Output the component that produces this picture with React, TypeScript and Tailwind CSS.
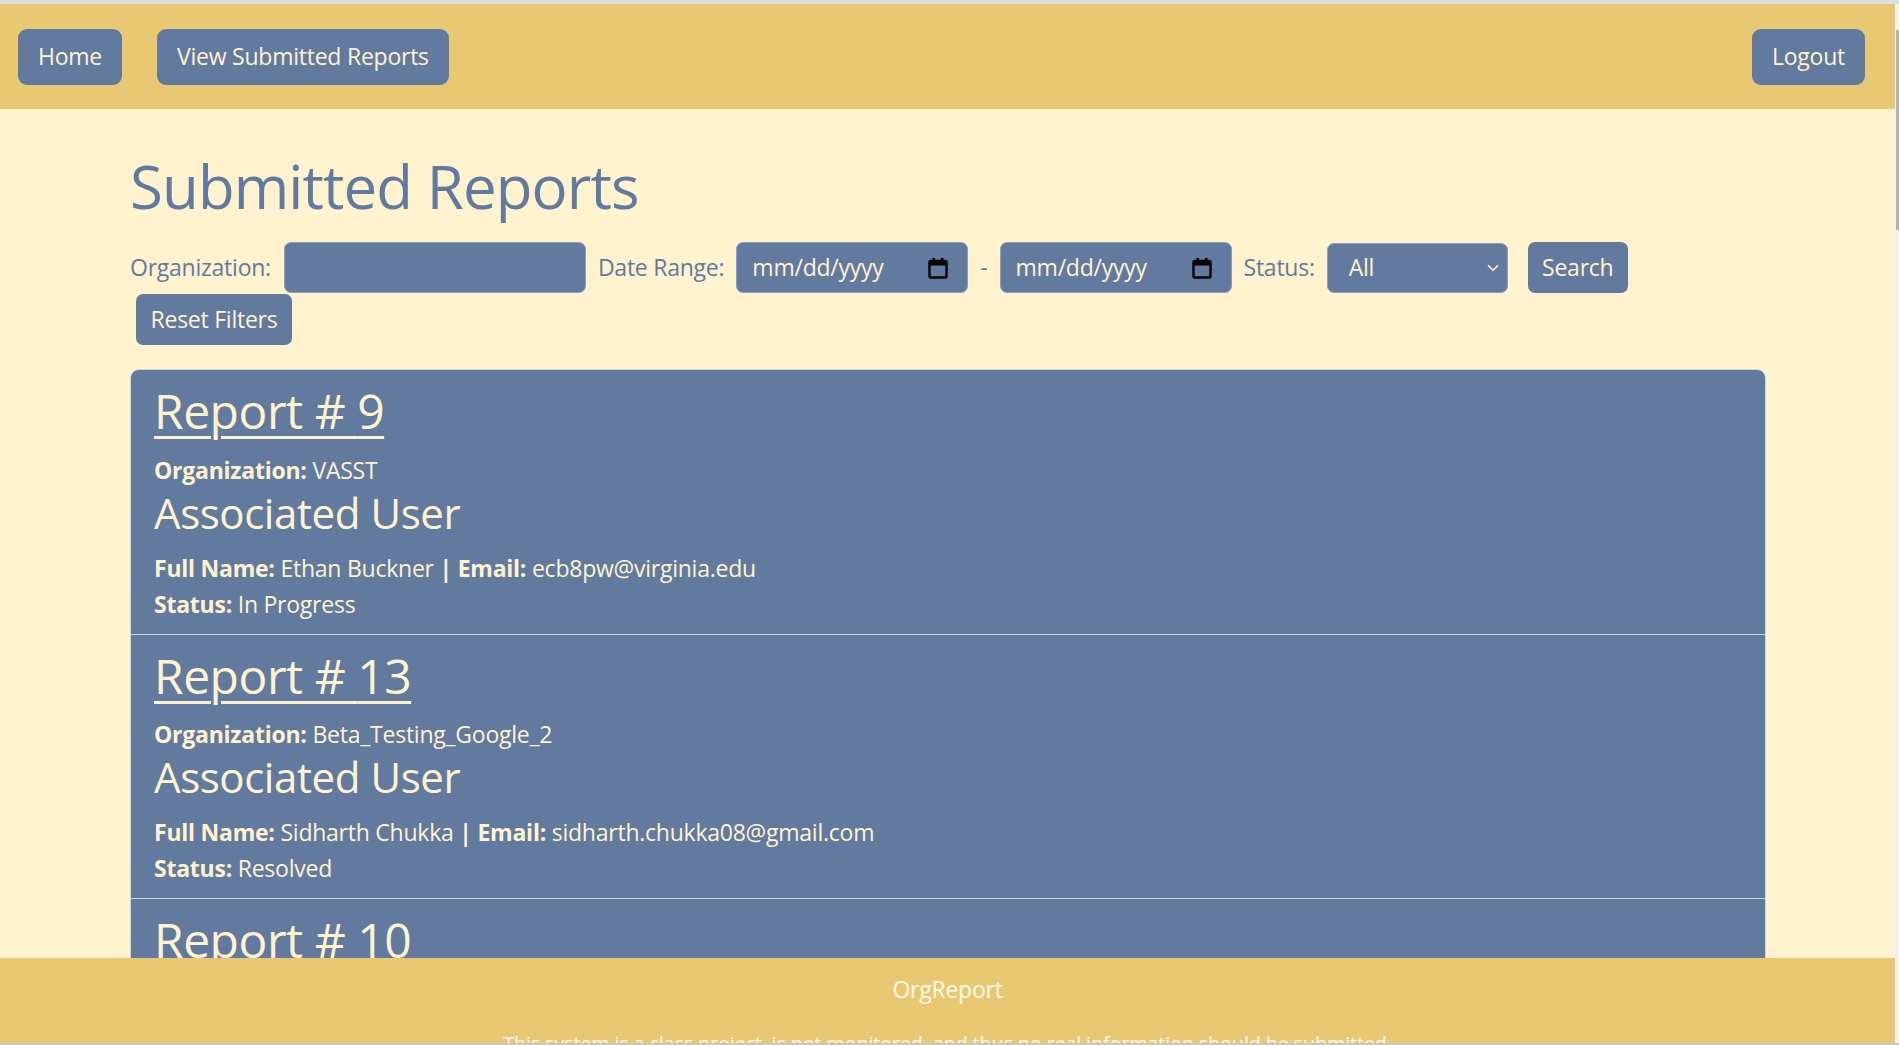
import React from 'react';
import { ChevronDown } from 'lucide-react';

const REPORTS = [
  {
    id: 9,
    org: 'VASST',
    name: 'Ethan Buckner',
    email: 'ecb8pw@virginia.edu',
    status: 'In Progress',
  },
  {
    id: 13,
    org: 'Beta_Testing_Google_2',
    name: 'Sidharth Chukka',
    email: 'sidharth.chukka08@gmail.com',
    status: 'Resolved',
  },
  {
    id: 10,
    org: 'VASST',
    name: 'Ethan Buckner',
    email: 'ecb8pw@virginia.edu',
    status: 'Submitted',
  },
];

function CalendarIcon() {
  return (
    <svg width="20" height="22" viewBox="0 0 20 22" className="shrink-0">
      <rect x="1.5" y="4" width="17" height="16.5" rx="1.5" fill="none" stroke="#000" strokeWidth="2.4" />
      <rect x="1.5" y="4" width="17" height="4.5" fill="#000" />
      <rect x="4.5" y="1" width="2.6" height="4" fill="#000" />
      <rect x="12.9" y="1" width="2.6" height="4" fill="#000" />
    </svg>
  );
}

function NavButton({ label }: { label: string }) {
  return (
    <button className="h-[56px] px-[20px] rounded-[9px] bg-[#637A9F] text-[#FFF3CF] text-[23px] leading-[1.5]">
      {label}
    </button>
  );
}

function DateBox() {
  return (
    <div className="w-[232px] h-[51px] rounded-[7px] bg-[#637A9F] border border-[#8ea0bb] flex items-center justify-between pl-[15px] pr-[19px]">
      <span className="text-[23px] text-[#FFF3CF]">mm/dd/yyyy</span>
      <CalendarIcon />
    </div>
  );
}

export default function App() {
  return (
    <div className="w-[1899px] h-[1045px] overflow-hidden relative bg-[#FFF3CF] flex flex-col font-['Open_Sans',sans-serif] tracking-[-0.015em]">
      {/* window edge */}
      <div className="h-[4px] bg-[#dedede] shrink-0" />

      <div className="flex flex-1 min-h-0">
        <div className="flex-1 min-w-0">
          {/* Navbar */}
          <nav className="h-[105px] bg-[#E8C872] flex items-center pl-[18px] pr-[30px]">
            <NavButton label="Home" />
            <div className="ml-[35px]">
              <NavButton label="View Submitted Reports" />
            </div>
            <div className="ml-auto">
              <NavButton label="Logout" />
            </div>
          </nav>

          <main className="ml-[130px] w-[1636px] pt-[41px]">
            <h1 className="text-[60px] leading-[1.2] font-medium tracking-[-0.015em] text-[#637A9F]">Submitted Reports</h1>

            {/* Filters */}
            <div className="mt-[20px] flex items-center h-[51px] text-[23px] text-[#637A9F]">
              <span>Organization:</span>
              <div className="ml-[13px] w-[302px] h-[51px] rounded-[7px] bg-[#637A9F] border border-[#8ea0bb]" />
              <span className="ml-[12px]">Date Range:</span>
              <div className="ml-[12px]">
                <DateBox />
              </div>
              <span className="mx-[12px]">-</span>
              <DateBox />
              <span className="ml-[12px]">Status:</span>
              <div className="ml-[12px] w-[181px] h-[50px] rounded-[7px] bg-[#637A9F] border border-[#8ea0bb] flex items-center justify-between pl-[21px] pr-[5px]">
                <span className="text-[23px] text-[#FFF3CF]">All</span>
                <ChevronDown size={18} strokeWidth={2.2} className="text-[#FFF3CF]" />
              </div>
              <button className="ml-[20px] w-[100px] h-[51px] rounded-[7px] bg-[#637A9F] text-[#FFF3CF] text-[23px]">
                Search
              </button>
            </div>
            <div className="mt-[1px] pl-[6px]">
              <button className="w-[156px] h-[51px] rounded-[7px] bg-[#637A9F] text-[#FFF3CF] text-[23px]">
                Reset Filters
              </button>
            </div>

            {/* Report list */}
            <div className="mt-[24px] rounded-t-[9px] border border-[#C9D7DD] bg-[#637A9F] text-[#FFF3CF]">
              {REPORTS.map((r, i) => (
                <div key={r.id} className={`px-[23px] pt-[12px] pb-[12px] ${i > 0 ? 'border-t border-[#C9D7DD]' : ''}`}>
                  <h2 className="text-[48px] leading-[1.2] font-medium mb-[12px] tracking-[-0.01em]">
                    <a className="underline decoration-[3px] underline-offset-[7px]">Report # {r.id}</a>
                  </h2>
                  <p className="text-[23px] leading-[36px]">
                    <b className="font-bold">Organization:</b> {r.org}
                  </p>
                  <h3 className="text-[42px] leading-[50px] font-medium mb-[12px] tracking-[-0.01em]">Associated User</h3>
                  <p className="text-[23px] leading-[36px]">
                    <b className="font-bold">Full Name:</b> {r.name} <b className="font-bold">| Email:</b> {r.email}
                  </p>
                  <p className="text-[23px] leading-[36px]">
                    <b className="font-bold">Status:</b> {r.status}
                  </p>
                </div>
              ))}
            </div>
          </main>
        </div>

        {/* scrollbar */}
        <div className="w-[4px] shrink-0 bg-[#f1f1f1] relative">
          <div className="absolute right-0 top-[26px] w-[3px] h-[200px] bg-[#b4b4b4]" />
        </div>
      </div>

      {/* Fixed footer over the list */}
      <footer className="absolute left-0 top-[958px] w-[1895px] h-[85px] bg-[#E8C872] overflow-hidden text-center text-[#fff9ea]">
        <p className="pt-[13px] text-[23px] leading-[36px]">OrgReport</p>
        <p className="mt-[22px] text-[20px] leading-[1.5]">
          This system is a class project, is not monitored, and thus no real information should be submitted.
        </p>
      </footer>
      <div className="absolute left-0 top-[1043px] w-full h-[2px] bg-[#c8c8c8]" />
    </div>
  );
}
